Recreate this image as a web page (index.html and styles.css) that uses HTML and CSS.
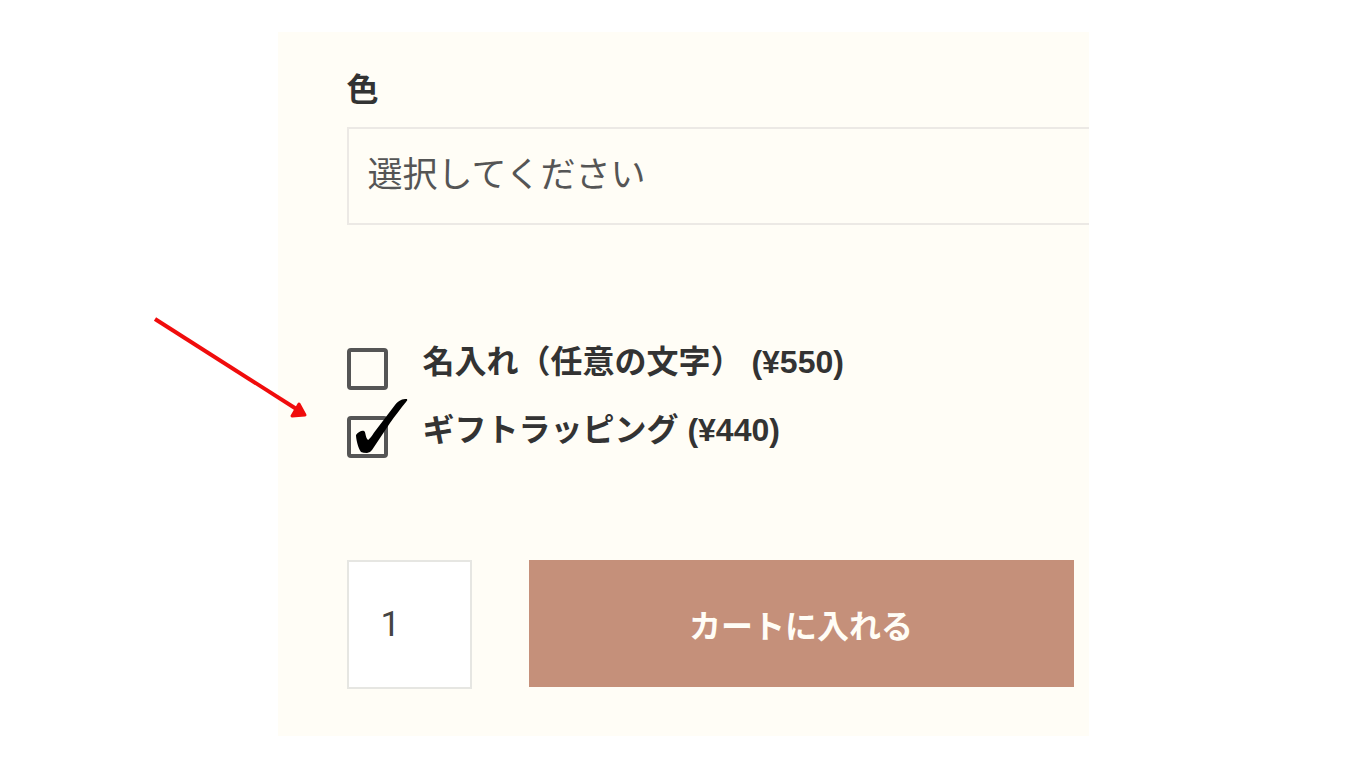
FILE: index.html
```
<!DOCTYPE html>
<html lang="ja">
<head>
<meta charset="UTF-8">
<meta name="viewport" content="width=device-width, initial-scale=1.0">
<title>ギフトラッピング</title>
<link rel="stylesheet" href="styles.css">
</head>
<body>

<div class="container">
    <form class="product-form">
        <label class="field-label" for="color">色</label>
        <select class="color-select" id="color">
            <option>選択してください</option>
        </select>

        <div class="options">
            <div class="option">
                <input class="option-box" type="checkbox" id="naming">
                <label class="option-label" for="naming">名入れ（任意の文字） (¥550)</label>
            </div>
            <div class="option">
                <input class="option-box" type="checkbox" id="wrapping" checked>
                <svg class="check" viewBox="0 0 54 55" aria-hidden="true">
                    <path d="M1 36C3 33 7 31 9 32C11 33 10 38 13 41C15 40 18 35 21 31L40 6C44 1 47 0 52 0Q53 1 51 3C46 9 40 17 35 24L17 51Q15 54 12 54Q8 54 6 53C3 49 1 40 1 36Z"/>
                </svg>
                <label class="option-label" for="wrapping">ギフトラッピング (¥440)</label>
            </div>
        </div>

        <div class="cart">
            <input class="quantity" type="text" value="1" aria-label="数量">
            <button class="cart-btn" type="button">カートに入れる</button>
        </div>
    </form>

    <svg class="arrow" viewBox="0 0 160 104" aria-hidden="true">
        <path class="arrow-line" d="M2 3L145 94"/>
        <path class="arrow-head" d="M146 88L152 99L139 100Z"/>
    </svg>
</div>

</body>
</html>
```

FILE: styles.css
```
* {
    box-sizing: border-box;
}

body {
    margin: 0;
    padding: 32px;
    background: #fff;
    color: #333;
    font-family: "Liberation Sans", "Noto Sans CJK JP", sans-serif;
}

.container {
    position: relative;
    max-width: 811px;
    margin: 0 auto;
}

.product-form {
    display: flex;
    flex-direction: column;
    padding: 34px 15px 47px 69px;
    background: #fffdf6;
    overflow: hidden;
}

.field-label {
    margin-bottom: 13px;
    font-size: 32px;
    font-weight: bold;
    line-height: 48px;
}

/* Runs past the right edge of the form */
.color-select {
    appearance: none;
    width: calc(100% + 40px);
    height: 98px;
    padding: 0 19px 4px;
    border: 2px solid #ece9e5;
    border-radius: 0;
    background: transparent;
    color: #555;
    font-family: inherit;
    font-size: 35px;
}

.options {
    display: flex;
    flex-direction: column;
    gap: 26px;
    margin: 123px 0 102px;
}

.option {
    position: relative;
    display: flex;
    align-items: flex-start;
    gap: 35px;
}

.option-box {
    appearance: none;
    flex: none;
    width: 41px;
    height: 42px;
    margin: 0;
    border: 4px solid #555;
    border-radius: 4px;
}

.option-label {
    font-size: 32px;
    font-weight: bold;
    line-height: 28px;
}

.check {
    position: absolute;
    top: -17px;
    left: 8px;
    width: 54px;
    height: 55px;
    pointer-events: none;
}

.cart {
    display: flex;
    align-items: flex-start;
    gap: 57px;
}

.quantity {
    width: 125px;
    height: 129px;
    padding: 0 32px;
    border: 2px solid #e6e6e2;
    border-radius: 0;
    background: #fff;
    color: #444;
    font-family: Roboto, "Noto Sans CJK JP", sans-serif;
    font-size: 35px;
}

.cart-btn {
    flex: 1;
    height: 127px;
    padding: 0;
    border: none;
    background: #c5907a;
    color: #fffdf6;
    font-family: inherit;
    font-size: 32px;
    font-weight: bold;
    cursor: pointer;
}

/* Arrow pointing at the gift wrapping box */
.arrow {
    position: absolute;
    top: 284px;
    left: -125px;
    width: 160px;
    height: 104px;
    pointer-events: none;
}

.arrow-line {
    fill: none;
    stroke: #f00c0c;
    stroke-width: 4;
}

.arrow-head {
    fill: #f00c0c;
    stroke: #f00c0c;
    stroke-width: 3;
    stroke-linejoin: round;
}
```
